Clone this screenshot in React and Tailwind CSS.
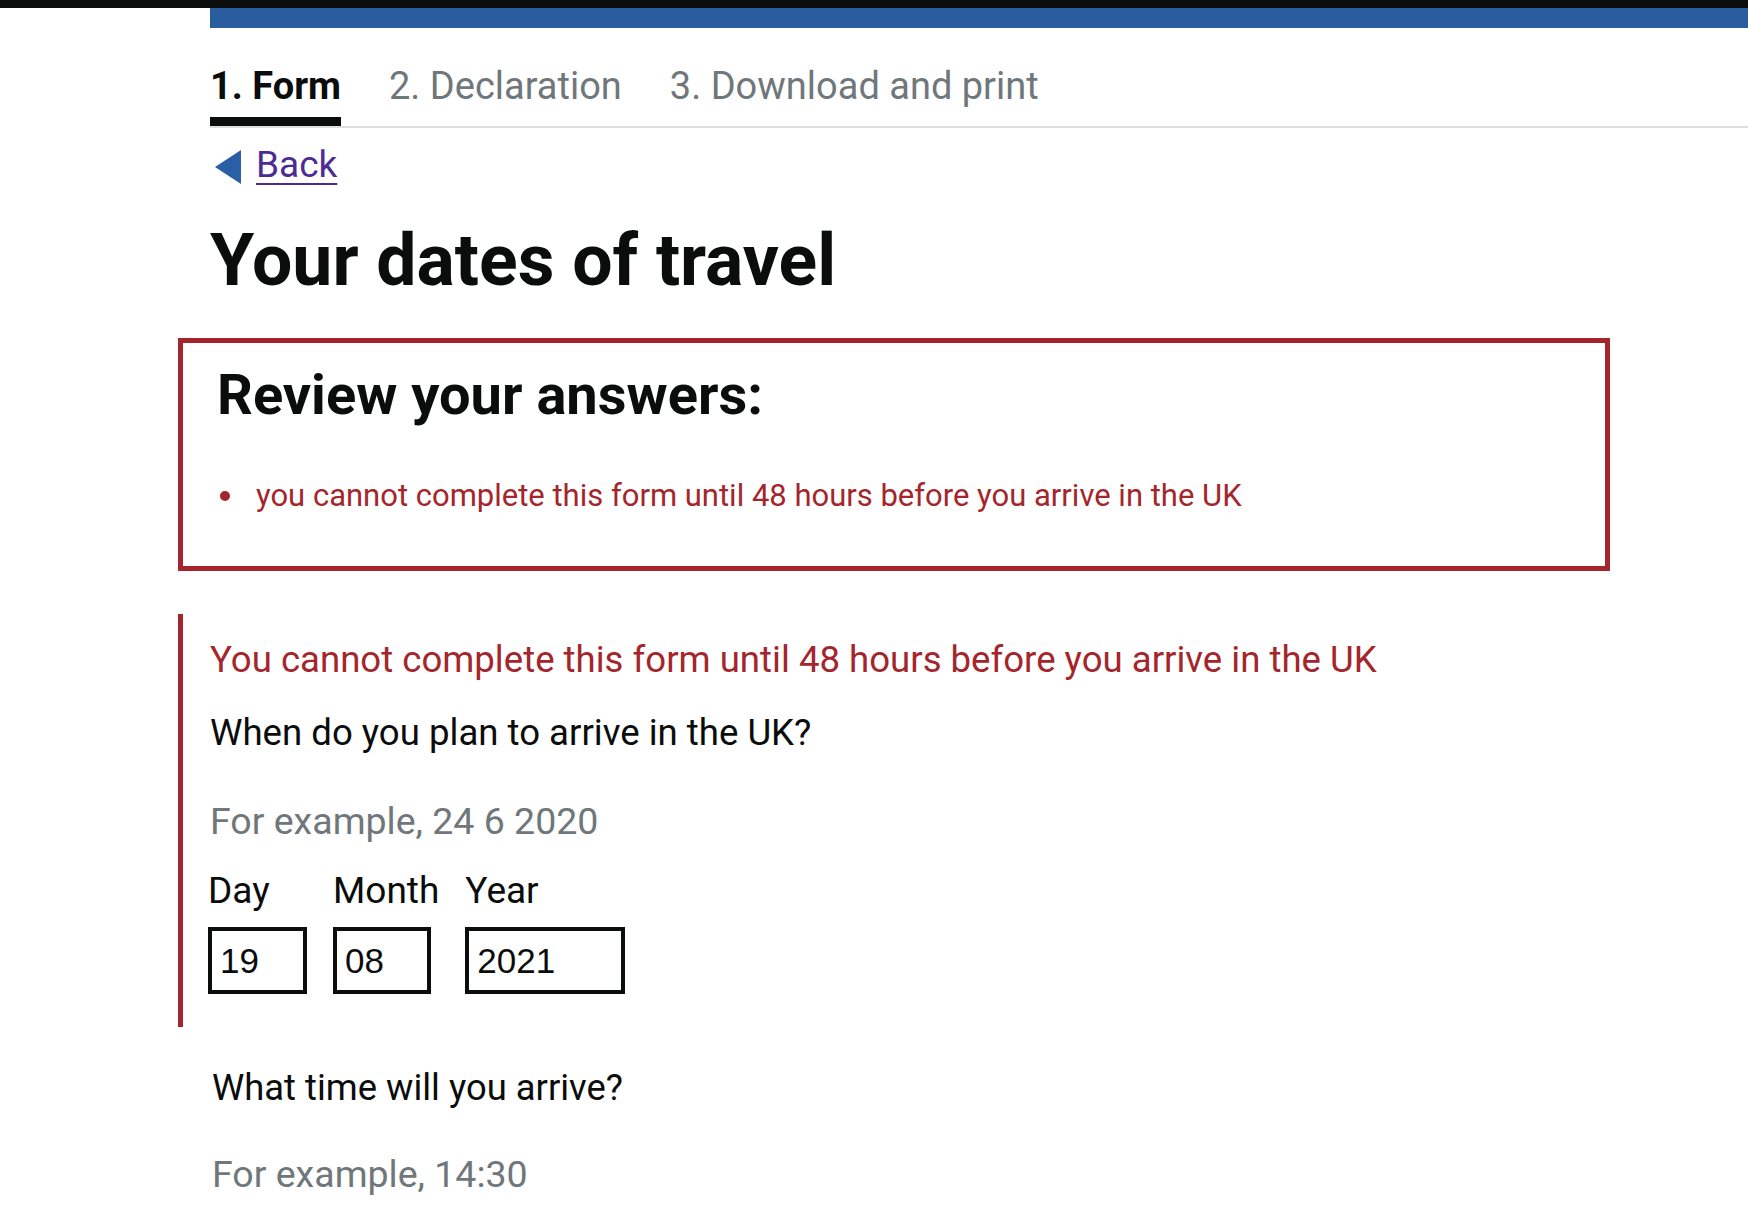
import { useState } from "react";

const tabs = [
  { label: "1. Form", active: true },
  { label: "2. Declaration" },
  { label: "3. Download and print" },
];

const DateField = ({ label, value, width }) => (
  <div className="flex flex-col">
    <label className="text-[37px] leading-[44px] text-[#0b0c0c]">{label}</label>
    <input
      value={value}
      readOnly
      className={`mt-[14px] h-[67px] ${width} border-4 border-[#0b0c0c] pl-[8px] font-['Liberation_Sans',Arial,sans-serif] text-[35px] text-[#0b0c0c] outline-none`}
    />
  </div>
);

const App = () => {
  const [day] = useState("19");
  const [month] = useState("08");
  const [year] = useState("2021");

  return (
    <div className="min-h-screen bg-white font-['Roboto',sans-serif] text-[#0b0c0c] overflow-hidden">
      <div className="h-2 bg-[#0b0c0c]" />

      <div className="ml-[210px]">
        <div className="h-[20px] bg-[#2a5d9f]" />

        <nav className="mt-9 flex gap-12 border-b-2 border-[#dedede]">
          {tabs.map((tab) => (
            <div
              key={tab.label}
              className={`pb-[9px] text-[38px] leading-[44px] border-b-[9px] ${
                tab.active
                  ? "border-[#0b0c0c] font-bold text-[#0b0c0c]"
                  : "border-transparent text-[#6f777b]"
              }`}
            >
              {tab.label}
            </div>
          ))}
        </nav>

        <a href="#" className="mt-[17px] ml-[5px] flex w-fit items-center gap-[15px]">
          <svg width="26" height="34" viewBox="0 0 26 34" className="mt-[4px]">
            <polygon points="26,0 26,34 0,17" fill="#2a5ea5" />
          </svg>
          <span className="text-[37px] leading-[40px] text-[#4c2c92] underline decoration-2 underline-offset-[6px]">
            Back
          </span>
        </a>

        <h1 className="mt-[36px] text-[71.5px] leading-[80px] font-bold">
          Your dates of travel
        </h1>
      </div>

      <div className="ml-[178px] w-[1432px]">
        <div className="mt-[37px] border-[5px] border-[#a4262c] pl-[34px] pt-[20px] pb-[52px]">
          <h2 className="text-[56px] leading-[64px] font-bold">Review your answers:</h2>
          <ul className="mt-[51px]">
            <li className="flex items-center text-[31px] leading-[36px] text-[#a4262c]">
              <span className="ml-[3px] mr-[26px] h-[10px] w-[10px] rounded-full bg-[#a4262c]" />
              you cannot complete this form until 48 hours before you arrive in the UK
            </li>
          </ul>
        </div>

        <div className="mt-[43px] border-l-[5px] border-[#a4262c] pl-[25px] pt-[25px] pb-[33px]">
          <p className="pl-[2px] text-[36.6px] leading-[42px] text-[#a4262c]">
            You cannot complete this form until 48 hours before you arrive in the UK
          </p>
          <p className="mt-[31px] pl-[2px] text-[36.6px] leading-[42px]">
            When do you plan to arrive in the UK?
          </p>
          <p className="mt-[45px] pl-[2px] text-[37.5px] leading-[44px] text-[#6f777b]">
            For example, 24 6 2020
          </p>
          <div className="mt-[26px] flex gap-[26px]">
            <DateField label="Day" value={day} width="w-[99px]" />
            <DateField label="Month" value={month} width="w-[98px]" />
            <DateField label="Year" value={year} width="w-[160px]" />
          </div>
        </div>
      </div>

      <div className="ml-[210px] pl-[2px]">
        <p className="mt-[40px] text-[36.4px] leading-[42px]">What time will you arrive?</p>
        <p className="mt-[43px] text-[37.5px] leading-[44px] text-[#6f777b]">For example, 14:30</p>
      </div>
    </div>
  );
};

export default App;
